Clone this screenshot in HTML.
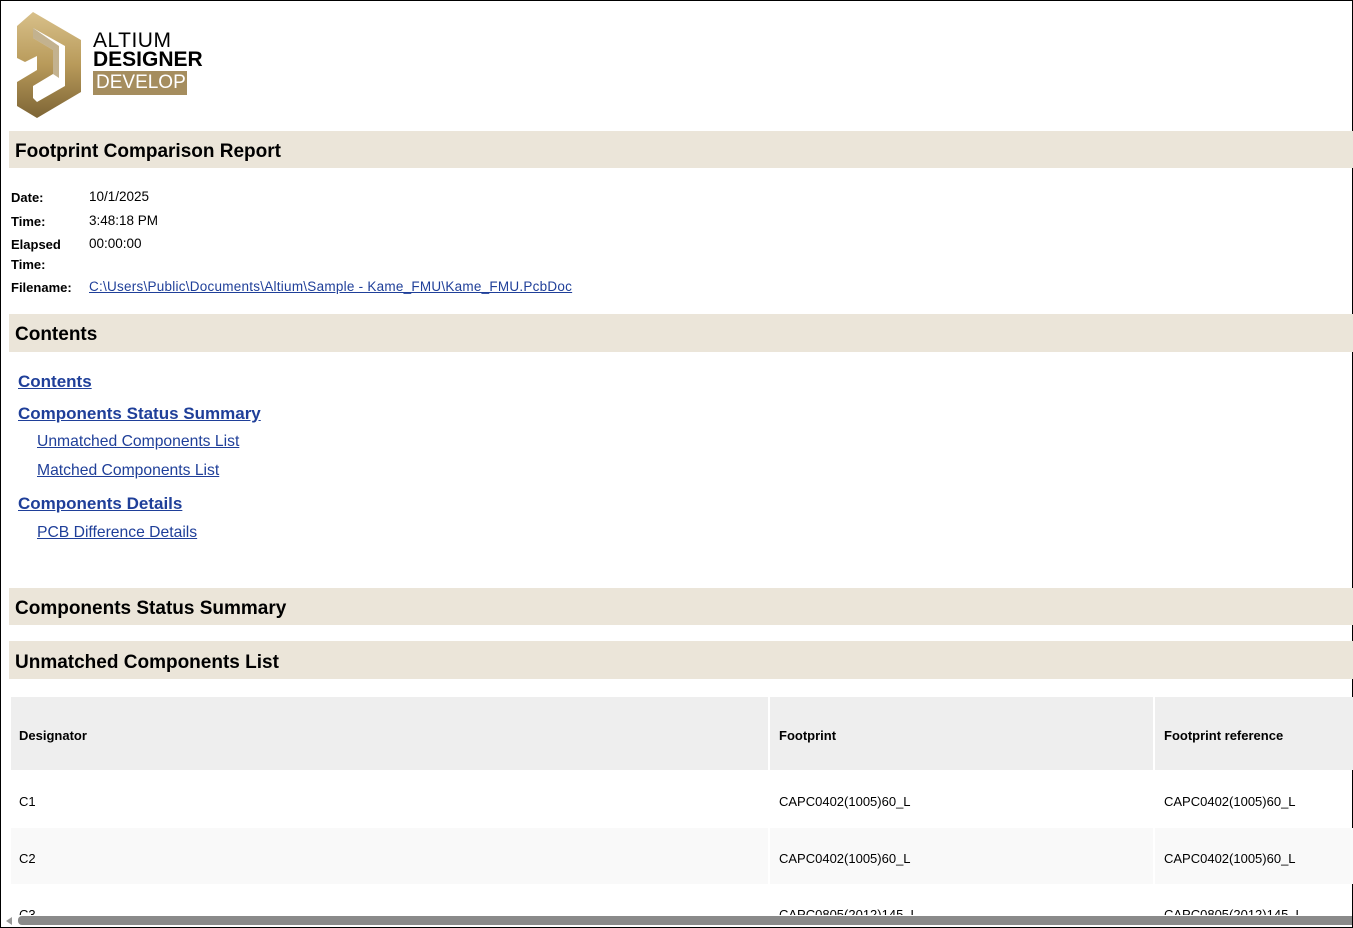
<!DOCTYPE html>
<html><head><meta charset="utf-8"><style>
html,body{margin:0;padding:0;}
body{width:1353px;height:928px;position:relative;overflow:hidden;background:#fff;font-family:"Liberation Sans",sans-serif;color:#000;}
.frame{position:absolute;left:0;top:0;width:1351px;height:926px;border:1px solid #000;}
.a{position:absolute;white-space:nowrap;}
.bar{position:absolute;left:9px;width:1344px;background:#ebe5d9;}
.bar span{position:absolute;left:6px;font-weight:bold;font-size:19px;color:#000;}
.lbl{font-size:13px;font-weight:bold;}
.val{font-size:13.5px;}
a{color:#1f3f99;text-decoration:underline;}
.h1l{font-size:17px;font-weight:bold;}
.h2l{font-size:15.7px;}
.cell{position:absolute;font-size:13px;}
</style></head><body>
<div class="frame"></div>
<svg class="a" style="left:15px;top:10px" width="70" height="110" viewBox="0 0 70 110">
<defs><linearGradient id="g" x1="0" y1="0" x2="0" y2="1"><stop offset="0" stop-color="#d8c08a"/><stop offset="0.5" stop-color="#b89a5a"/><stop offset="1" stop-color="#7d6535"/></linearGradient></defs>
<polygon points="18,2 66,30 66,82 22,108 2,96 2,72 22,60 22,46 10,52 2,48 2,16" fill="url(#g)"/>
<polygon points="18,18 50,36 50,76 22,92 18,88 18,76 38,64 38,40 18,28" fill="#fff"/>
<polygon points="18,18 18,28 38,40 38,64 44,68 44,36" fill="#9b7e45" opacity="0.6"/>
</svg>
<div class="a" style="left:93px;top:29px;font-size:21px;letter-spacing:0.5px;">ALTIUM</div>
<div class="a" style="left:93px;top:48px;font-size:21px;font-weight:bold;">DESIGNER</div>
<div class="a" style="left:93px;top:71px;width:94px;height:24px;background:#a58d5e;"></div>
<div class="a" style="left:96px;top:72px;font-size:19px;color:#fff;">DEVELOP</div>

<div class="bar" style="top:131px;height:37px"><span style="top:10px">Footprint Comparison Report</span></div>
<div class="a lbl" style="left:11px;top:190px">Date:</div><div class="a val" style="left:89px;top:189px">10/1/2025</div>
<div class="a lbl" style="left:11px;top:214px">Time:</div><div class="a val" style="left:89px;top:213px">3:48:18 PM</div>
<div class="a lbl" style="left:11px;top:237px">Elapsed</div><div class="a val" style="left:89px;top:236px">00:00:00</div>
<div class="a lbl" style="left:11px;top:257px">Time:</div>
<div class="a lbl" style="left:11px;top:280px">Filename:</div>
<div class="a val" style="left:89px;top:279px"><a style="font-size:13.5px;letter-spacing:0.25px">C:\Users\Public\Documents\Altium\Sample - Kame_FMU\Kame_FMU.PcbDoc</a></div>

<div class="bar" style="top:314px;height:38px"><span style="top:10px">Contents</span></div>
<div class="a h1l" style="left:18px;top:372px"><a>Contents</a></div>
<div class="a h1l" style="left:18px;top:404px"><a>Components Status Summary</a></div>
<div class="a h2l" style="left:37px;top:433px"><a>Unmatched Components List</a></div>
<div class="a h2l" style="left:37px;top:462px"><a>Matched Components List</a></div>
<div class="a h1l" style="left:18px;top:494px"><a>Components Details</a></div>
<div class="a h2l" style="left:37px;top:524px"><a>PCB Difference Details</a></div>

<div class="bar" style="top:588px;height:37px"><span style="top:10px">Components Status Summary</span></div>
<div class="bar" style="top:641px;height:38px"><span style="top:11px">Unmatched Components List</span></div>

<div class="a" style="left:11px;top:697px;width:1342px;height:73px;background:#eee"></div>
<div class="a" style="left:11px;top:828px;width:1342px;height:56px;background:#f9f9f9"></div>
<div class="a" style="left:768px;top:697px;width:2px;height:220px;background:#fff"></div>
<div class="a" style="left:1153px;top:697px;width:2px;height:220px;background:#fff"></div>
<div class="cell lbl" style="left:19px;top:728px">Designator</div>
<div class="cell lbl" style="left:779px;top:728px">Footprint</div>
<div class="cell lbl" style="left:1164px;top:728px">Footprint reference</div>
<div class="cell" style="left:19px;top:794px">C1</div>
<div class="cell" style="left:779px;top:794px">CAPC0402(1005)60_L</div>
<div class="cell" style="left:1164px;top:794px">CAPC0402(1005)60_L</div>
<div class="cell" style="left:19px;top:851px">C2</div>
<div class="cell" style="left:779px;top:851px">CAPC0402(1005)60_L</div>
<div class="cell" style="left:1164px;top:851px">CAPC0402(1005)60_L</div>
<div class="cell" style="left:19px;top:907px">C3</div>
<div class="cell" style="left:779px;top:907px">CAPC0805(2012)145_L</div>
<div class="cell" style="left:1164px;top:907px">CAPC0805(2012)145_L</div>

<div class="a" style="left:1px;top:915px;width:1351px;height:12px;background:#fff"></div>
<svg class="a" style="left:4px;top:916px" width="10" height="10"><polygon points="8,1 8,9 2,5" fill="#999"/></svg>
<div class="a" style="left:18px;top:916px;width:1334px;height:9px;background:#8a8a8a;border-radius:4px 0 0 4px"></div>
</body></html>
